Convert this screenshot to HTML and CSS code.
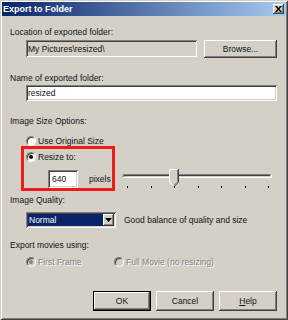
FILE: index.html
```html
<!DOCTYPE html>
<html lang="en">
<head>
    <title>Export to Folder</title>
    <link rel="stylesheet" href="styles.css">
</head>
<body>
<div class="window">
    <div class="titlebar">
        <span class="title">Export to Folder</span>
        <span class="close">
            <svg width="7" height="6" viewBox="0 0 7 6"><path d="M0 0h2l1.5 2 1.5-2h2l-2.5 3 2.5 3h-2l-1.5-2-1.5 2h-2l2.5-3z" fill="#000"/></svg>
        </span>
    </div>
    <div class="content">
        <div class="label l-location">Location of exported folder:</div>
        <div class="row indent r-location">
            <div class="field readonly path">My Pictures\resized\</div>
            <div class="button browse">Browse...</div>
        </div>

        <div class="label l-name">Name of exported folder:</div>
        <div class="indent r-name"><div class="field name">resized</div></div>

        <div class="label l-size">Image Size Options:</div>
        <div class="radio-row indent r-original"><span class="radio"></span>Use Original Size</div>
        <div class="resize-row">
            <div class="highlight">
                <div class="radio-row"><span class="radio checked"></span>Resize to:</div>
                <div class="pixels-row">
                    <div class="field px">640</div>
                    <span class="unit">pixels</span>
                </div>
            </div>
            <svg class="slider" width="155" height="22" viewBox="0 0 155 22">
                <!-- channel -->
                <rect x="3" y="6" width="148" height="4" fill="#d4d0c8"/>
                <path d="M3 9.5V6.5H151" stroke="#808080" fill="none"/>
                <path d="M4 8.5V7.5H150" stroke="#404040" fill="none"/>
                <path d="M3 9.5H151.5V6" stroke="#fff" fill="none"/>
                <!-- ticks -->
                <g fill="#000">
                    <rect x="7" y="18" width="1" height="2"/>
                    <rect x="31" y="18" width="1" height="2"/>
                    <rect x="54" y="18" width="1" height="2"/>
                    <rect x="78" y="18" width="1" height="2"/>
                    <rect x="101" y="18" width="1" height="2"/>
                    <rect x="125" y="18" width="1" height="2"/>
                    <rect x="148" y="18" width="1" height="2"/>
                </g>
                <!-- thumb -->
                <path d="M49 1H58V14L53.5 18.5L49 14Z" fill="#d4d0c8"/>
                <path d="M49.5 14V1.5H57.5" stroke="#fff" fill="none"/>
                <path d="M58.5 1V14.2L54 18.7" stroke="#404040" fill="none"/>
                <path d="M57.5 2V13.8L53.8 17.5" stroke="#808080" fill="none"/>
                <path d="M49.5 14L53.5 18" stroke="#fff" fill="none"/>
            </svg>
        </div>

        <div class="label l-quality">Image Quality:</div>
        <div class="row indent r-quality">
            <div class="select">
                <span class="selected">Normal</span>
                <span class="drop">
                    <svg width="7" height="4" viewBox="0 0 7 4"><path d="M0 0h7L3.5 4z" fill="#000"/></svg>
                </span>
            </div>
            <span class="hint">Good balance of quality and size</span>
        </div>

        <div class="label l-movies">Export movies using:</div>
        <div class="row indent r-movies disabled">
            <div class="radio-row first"><span class="radio checked"></span>First Frame</div>
            <div class="radio-row"><span class="radio"></span>Full Movie (no resizing)</div>
        </div>

        <div class="buttons">
            <div class="button default">OK</div>
            <div class="button">Cancel</div>
            <div class="button"><u>H</u>elp</div>
        </div>
    </div>
</div>
</body>
</html>
```

FILE: styles.css
```css
body {
    margin: 0;
    font-family: "Liberation Sans", Arial, sans-serif;
    font-size: 8.5px;
    color: #111;
    background: #d4d0c8;
}

.window {
    width: 288px;
    height: 320px;
    box-sizing: border-box;
    padding: 2px;
    background: #d4d0c8;
    box-shadow: inset 1px 1px #d4d0c8, inset -1px -1px #404040,
                inset 2px 2px #fff, inset -2px -2px #808080;
}

.titlebar {
    height: 14px;
    display: flex;
    align-items: center;
    justify-content: space-between;
    padding: 0 2px 0 1px;
    background: linear-gradient(to right, #0a246a, #a6caf0);
}

.title {
    color: #fff;
    font-weight: bold;
    font-size: 9px;
}

.close {
    width: 11px;
    height: 10px;
    box-sizing: border-box;
    display: flex;
    align-items: center;
    justify-content: center;
    background: #d4d0c8;
    box-shadow: inset -1px -1px #404040, inset 1px 1px #fff, inset -2px -2px #808080;
}

.content {
    padding: 0 9px 0 8px;
}

.label {
    height: 12px;
    line-height: 12px;
    white-space: nowrap;
}

.row {
    display: flex;
    align-items: center;
}

.indent {
    margin-left: 16px;
}

.field {
    box-sizing: border-box;
    background: #fff;
    padding-left: 2px;
    display: flex;
    align-items: center;
    white-space: nowrap;
    box-shadow: inset 1px 1px #808080, inset -1px -1px #fff,
                inset 2px 2px #404040, inset -2px -2px #d4d0c8;
}

.field.readonly {
    background: #d4d0c8;
}

.button {
    box-sizing: border-box;
    height: 20px;
    width: 58px;
    display: flex;
    align-items: center;
    justify-content: center;
    background: #d4d0c8;
    box-shadow: inset -1px -1px #404040, inset 1px 1px #fff, inset -2px -2px #808080;
}

.button.default {
    box-shadow: inset 0 0 0 1px #000, inset -2px -2px #404040,
                inset 2px 2px #fff, inset -3px -3px #808080;
}

/* rows */
.l-location { margin-top: 10px; }
.r-location { margin-top: 2px; height: 18px; }
.path { width: 171px; height: 17px; align-self: flex-start; }
.browse { width: 73px; height: 18px; margin-left: 7px; }

.l-name { margin-top: 14px; }
.r-name { margin-top: 1px; }
.name { height: 16px; }

.l-size { margin-top: 14px; }

.radio-row {
    display: flex;
    align-items: center;
    height: 12px;
    gap: 2px;
    white-space: nowrap;
}

.radio {
    position: relative;
    width: 10px;
    height: 10px;
    box-sizing: border-box;
    border-radius: 50%;
    background: #fff;
    border: 1px solid;
    border-color: #808080 #fff #fff #808080;
    box-shadow: inset 1px 1px #404040;
}

.radio.checked::after {
    content: "";
    position: absolute;
    left: 2px;
    top: 2px;
    width: 4px;
    height: 4px;
    border-radius: 50%;
    background: #000;
}

.r-original { margin-top: 8px; height: 11px; }

.resize-row {
    display: flex;
    align-items: flex-start;
}

.highlight {
    margin-left: 11px;
    width: 94px;
    height: 45px;
    box-sizing: border-box;
    border: 3px solid #f01a1a;
    padding: 2px 0 0 2px;
}

.pixels-row {
    display: flex;
    align-items: center;
    margin-top: 7px;
}

.px {
    width: 30px;
    height: 18px;
    margin-left: 22px;
    padding-left: 4px;
}

.unit {
    margin-left: 11px;
}

.slider {
    margin-left: 5px;
    margin-top: 22px;
}

.l-quality { margin-top: 3px; }
.r-quality { margin-top: 6px; height: 16px; }

.select {
    width: 90px;
    height: 16px;
    box-sizing: border-box;
    display: flex;
    padding: 2px;
    background: #fff;
    box-shadow: inset 1px 1px #808080, inset -1px -1px #fff,
                inset 2px 2px #404040, inset -2px -2px #d4d0c8;
}

.selected {
    flex: 1;
    background: #0a246a;
    color: #fff;
    padding-left: 1px;
    line-height: 12px;
}

.drop {
    width: 11px;
    display: flex;
    align-items: center;
    justify-content: center;
    background: #d4d0c8;
    box-shadow: inset -1px -1px #404040, inset 1px 1px #fff, inset -2px -2px #808080;
}

.hint {
    margin-left: 8px;
    white-space: nowrap;
}

.l-movies { margin-top: 11px; }
.r-movies { margin-top: 5px; }

.disabled {
    color: #808080;
    text-shadow: 1px 1px #fff;
}

.disabled .radio {
    background: #d4d0c8;
}

.disabled .radio.checked::after {
    background: #808080;
}

.r-movies .first {
    width: 88px;
}

.buttons {
    display: flex;
    justify-content: flex-end;
    gap: 5px;
    margin-top: 23px;
}
```
